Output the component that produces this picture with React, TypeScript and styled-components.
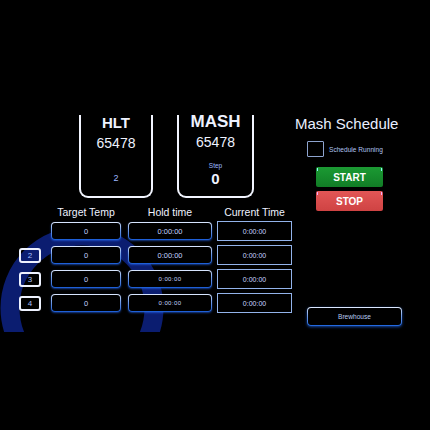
import styled, { createGlobalStyle } from "styled-components";

const GlobalStyle = createGlobalStyle`
  html, body {
    margin: 0;
    padding: 0;
    background: #000;
  }
  body {
    font-family: "Liberation Sans", Arial, sans-serif;
  }
`;

const Screen = styled.div`
  position: relative;
  width: 430px;
  height: 430px;
  box-sizing: border-box;
  padding: 115px 28px 0 19px;
  display: grid;
  grid-template-columns: 273px 1fr;
  grid-template-rows: 211px;
  column-gap: 3px;
  background: #000;
  overflow: hidden;
`;

const Logo = styled.svg`
  position: absolute;
  left: 0;
  top: 220px;
  z-index: 0;
`;

const LeftColumn = styled.div`
  position: relative;
  z-index: 1;
  display: flex;
  flex-direction: column;
`;

const TankRow = styled.div`
  display: flex;
  gap: 24px;
  padding-left: 60px;
  height: 83px;
`;

const Tank = styled.div<{ $width: number }>`
  width: ${({ $width }) => $width}px;
  box-sizing: border-box;
  border: 2.5px solid #f2f5ff;
  border-top: none;
  border-radius: 0 0 9px 9px;
  display: flex;
  flex-direction: column;
  align-items: center;
`;

const TankText = styled.div<{ $size: number; $top: number; $bold?: boolean; $dim?: boolean }>`
  font-size: ${({ $size }) => $size}px;
  line-height: 1;
  margin-top: ${({ $top }) => $top}px;
  font-weight: ${({ $bold }) => ($bold ? "bold" : "normal")};
  color: ${({ $dim }) => ($dim ? "#9db9ff" : "#eef2ff")};
`;

const Table = styled.div`
  display: grid;
  grid-template-columns: 32px 77px 89px 75px;
  grid-template-rows: 16px repeat(4, 20px);
  row-gap: 4px;
  margin-top: 3px;
  align-items: center;
`;

const HeaderCell = styled.div<{ $width: number }>`
  width: ${({ $width }) => $width}px;
  align-self: end;
  text-align: center;
  font-size: 10.5px;
  line-height: 1;
  color: #eef2ff;
  white-space: nowrap;
`;

const StepBox = styled.div`
  width: 22px;
  height: 15px;
  box-sizing: border-box;
  border: 2px solid #eef2ff;
  border-radius: 3px;
  display: flex;
  align-items: center;
  justify-content: center;
  font-size: 8px;
  color: #a8c0ff;
`;

const FieldBox = styled.div<{ $width: number; $small?: boolean }>`
  width: ${({ $width }) => $width}px;
  height: 18px;
  box-sizing: border-box;
  border: 1.5px solid transparent;
  border-radius: 4px;
  background: linear-gradient(#000, #000) padding-box,
    linear-gradient(180deg, #dde9ff 0%, #6f9be6 45%, #1a5cd6 100%) border-box;
  box-shadow: 0 1px 2px rgba(40, 110, 255, 0.55);
  display: flex;
  align-items: center;
  justify-content: center;
  font-size: ${({ $small }) => ($small ? "6px" : "7.5px")};
  letter-spacing: ${({ $small }) => ($small ? "0.4px" : "0")};
  color: #c4d4ff;
`;

const TimeBox = styled.div`
  width: 75px;
  height: 20px;
  box-sizing: border-box;
  border: 1.5px solid #93b3ea;
  display: flex;
  align-items: center;
  justify-content: center;
  font-size: 7px;
  color: #c8d8ff;
`;

const RightColumn = styled.div`
  position: relative;
  z-index: 1;
  display: flex;
  flex-direction: column;
`;

const Title = styled.div`
  font-size: 15px;
  line-height: 17px;
  color: #e9efff;
  white-space: nowrap;
`;

const CheckRow = styled.label`
  display: flex;
  align-items: center;
  gap: 5px;
  margin-top: 9px;
  padding-left: 12px;
`;

const CheckSquare = styled.span`
  width: 17px;
  height: 16px;
  box-sizing: border-box;
  border: 1.5px solid #8ea4cf;
  border-radius: 1px;
`;

const CheckLabel = styled.span`
  font-size: 6.6px;
  color: #b0c4f0;
  white-space: nowrap;
`;

const ButtonStack = styled.div`
  display: flex;
  flex-direction: column;
  gap: 4px;
  margin-top: 10px;
  padding-left: 21px;
`;

const ActionButton = styled.button<{ $tone: "go" | "halt" }>`
  position: relative;
  width: 67px;
  height: 20px;
  padding: 0;
  border: none;
  border-radius: 2px;
  background: ${({ $tone }) =>
    $tone === "go"
      ? "linear-gradient(180deg, #1b9a33 0%, #117d26 100%)"
      : "linear-gradient(180deg, #e25656 0%, #cf4343 100%)"};
  color: #fff;
  font-family: inherit;
  font-size: 10px;
  font-weight: bold;
  display: flex;
  align-items: center;
  justify-content: center;

  &::before,
  &::after {
    content: "";
    position: absolute;
    top: 1px;
    width: 1px;
    height: 3px;
    background: ${({ $tone }) => ($tone === "go" ? "#8ff0ff" : "#f0b0ff")};
  }
  &::before {
    left: 1px;
  }
  &::after {
    right: 1px;
  }
`;

const BrewhouseButton = styled.button`
  margin-top: auto;
  margin-left: 12px;
  width: 95px;
  height: 19px;
  padding: 0;
  box-sizing: border-box;
  border: 1.5px solid transparent;
  border-radius: 4px;
  background: linear-gradient(#000, #000) padding-box,
    linear-gradient(180deg, #e2ecff 0%, #7aa2e6 45%, #1e66e0 100%) border-box;
  box-shadow: 0 1px 3px rgba(30, 100, 230, 0.7);
  font-family: inherit;
  font-size: 6.6px;
  color: #b8cbf0;
`;

const rows = [
  { step: "", target: "0", hold: "0:00:00", small: false, current: "0:00:00" },
  { step: "2", target: "0", hold: "0:00:00", small: false, current: "0:00:00" },
  { step: "3", target: "0", hold: "0:00:00", small: true, current: "0:00:00" },
  { step: "4", target: "0", hold: "0:00:00", small: true, current: "0:00:00" },
];

const App = () => {
  return (
    <>
      <GlobalStyle />
      <Screen>
        <Logo width="180" height="112" viewBox="0 0 180 112">
          <circle cx="82" cy="88" r="72" fill="none" stroke="#0b1d70" strokeWidth="19" />
        </Logo>

        <LeftColumn>
          <TankRow>
            <Tank $width={74}>
              <TankText $size={15} $top={0} $bold>HLT</TankText>
              <TankText $size={14} $top={5.5}>65478</TankText>
              <TankText $size={9} $top={24} $dim>2</TankText>
            </Tank>
            <Tank $width={77}>
              <TankText $size={17} $top={-2.5} $bold>MASH</TankText>
              <TankText $size={14} $top={5.5}>65478</TankText>
              <TankText $size={6.5} $top={13.5} $dim>Step</TankText>
              <TankText $size={15} $top={1.5} $bold>0</TankText>
            </Tank>
          </TankRow>

          <Table>
            <div />
            <HeaderCell $width={70}>Target Temp</HeaderCell>
            <HeaderCell $width={84}>Hold time</HeaderCell>
            <HeaderCell $width={75}>Current Time</HeaderCell>

            {rows.map((row, i) => (
              <Row key={i} {...row} />
            ))}
          </Table>
        </LeftColumn>

        <RightColumn>
          <Title>Mash Schedule</Title>
          <CheckRow>
            <CheckSquare />
            <CheckLabel>Schedule Running</CheckLabel>
          </CheckRow>
          <ButtonStack>
            <ActionButton $tone="go">START</ActionButton>
            <ActionButton $tone="halt">STOP</ActionButton>
          </ButtonStack>
          <BrewhouseButton>Brewhouse</BrewhouseButton>
        </RightColumn>
      </Screen>
    </>
  );
};

const Row = ({
  step,
  target,
  hold,
  small,
  current,
}: {
  step: string;
  target: string;
  hold: string;
  small: boolean;
  current: string;
}) => (
  <>
    {step ? <StepBox>{step}</StepBox> : <div />}
    <FieldBox $width={70}>{target}</FieldBox>
    <FieldBox $width={84} $small={small}>{hold}</FieldBox>
    <TimeBox>{current}</TimeBox>
  </>
);

export default App;
